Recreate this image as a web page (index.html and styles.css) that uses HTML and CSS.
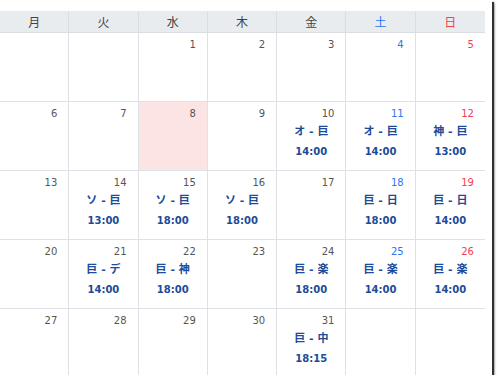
FILE: index.html
```html
<!DOCTYPE html>
<html lang="ja">
<head>
<meta charset="utf-8">
<link rel="stylesheet" href="styles.css">
</head>
<body>
<div class="shot">
  <div class="cal">
    <div class="hd">月</div><div class="hd">火</div><div class="hd">水</div><div class="hd">木</div><div class="hd">金</div><div class="hd sat">土</div><div class="hd sun">日</div>

    <div class="c"></div>
    <div class="c"></div>
    <div class="c"><div class="n">1</div></div>
    <div class="c"><div class="n">2</div></div>
    <div class="c"><div class="n">3</div></div>
    <div class="c"><div class="n sat">4</div></div>
    <div class="c last"><div class="n sun">5</div></div>

    <div class="c"><div class="n">6</div></div>
    <div class="c"><div class="n">7</div></div>
    <div class="c today"><div class="n">8</div></div>
    <div class="c"><div class="n">9</div></div>
    <div class="c"><div class="n">10</div><div class="ev">オ - 巨</div><div class="tm">14:00</div></div>
    <div class="c"><div class="n sat">11</div><div class="ev">オ - 巨</div><div class="tm">14:00</div></div>
    <div class="c last"><div class="n sun">12</div><div class="ev">神 - 巨</div><div class="tm">13:00</div></div>

    <div class="c"><div class="n">13</div></div>
    <div class="c"><div class="n">14</div><div class="ev">ソ - 巨</div><div class="tm">13:00</div></div>
    <div class="c"><div class="n">15</div><div class="ev">ソ - 巨</div><div class="tm">18:00</div></div>
    <div class="c"><div class="n">16</div><div class="ev">ソ - 巨</div><div class="tm">18:00</div></div>
    <div class="c"><div class="n">17</div></div>
    <div class="c"><div class="n sat">18</div><div class="ev">巨 - 日</div><div class="tm">18:00</div></div>
    <div class="c last"><div class="n sun">19</div><div class="ev">巨 - 日</div><div class="tm">14:00</div></div>

    <div class="c"><div class="n">20</div></div>
    <div class="c"><div class="n">21</div><div class="ev">巨 - デ</div><div class="tm">14:00</div></div>
    <div class="c"><div class="n">22</div><div class="ev">巨 - 神</div><div class="tm">18:00</div></div>
    <div class="c"><div class="n">23</div></div>
    <div class="c"><div class="n">24</div><div class="ev">巨 - 楽</div><div class="tm">18:00</div></div>
    <div class="c"><div class="n sat">25</div><div class="ev">巨 - 楽</div><div class="tm">14:00</div></div>
    <div class="c last"><div class="n sun">26</div><div class="ev">巨 - 楽</div><div class="tm">14:00</div></div>

    <div class="c bottom"><div class="n">27</div></div>
    <div class="c bottom"><div class="n">28</div></div>
    <div class="c bottom"><div class="n">29</div></div>
    <div class="c bottom"><div class="n">30</div></div>
    <div class="c bottom"><div class="n">31</div><div class="ev">巨 - 中</div><div class="tm">18:15</div></div>
    <div class="c bottom"></div>
    <div class="c bottom last"></div>
  </div>
</div>
</body>
</html>
```
FILE: styles.css
```css
html, body {
  margin: 0;
  padding: 0;
  background: #fff;
}
.shot {
  width: 492px;
  height: 375px;
  padding-top: 11px;
  box-sizing: border-box;
  background: #fff;
  box-shadow: 2px 2px 1px rgba(0,0,0,0.75), 3px 3px 2px rgba(0,0,0,0.25);
  overflow: hidden;
}
.cal {
  width: 485px;
  display: grid;
  grid-template-columns: repeat(7, 1fr);
  grid-template-rows: 22px repeat(4, 69px) 67px;
  font-family: "DejaVu Sans", "Noto Sans CJK JP", sans-serif;
}
.hd {
  background: #e9ecef;
  border-right: 1px solid #dadde1;
  border-bottom: 1px solid #dadde1;
  font-family: "Noto Sans CJK JP", sans-serif;
  font-size: 12px;
  line-height: 21px;
  text-align: center;
  color: #444;
}
.hd:last-child, .hd.sun { border-right: none; }
.hd.sat { color: #2f74f0; }
.hd.sun { color: #f2424a; }
.c {
  border-right: 1px solid #dee2e6;
  border-bottom: 1px solid #dee2e6;
  padding-top: 4px;
  text-align: center;
}
.c.last { border-right: none; }
.c.bottom { border-bottom: none; }
.c.today { background: #fde4e4; }
.n {
  font-size: 10px;
  line-height: 16px;
  color: #555;
  text-align: right;
  padding-right: 11px;
}
.n.sat { color: #2f74f0; }
.n.sun { color: #f2424a; }
.ev {
  font-family: "DejaVu Sans", "Noto Sans CJK JP", sans-serif;
  font-weight: bold;
  font-size: 11px;
  line-height: 20px;
  color: #1c4b99;
}
.tm {
  font-weight: bold;
  font-size: 10px;
  line-height: 19px;
  color: #1c4b99;
}
```
